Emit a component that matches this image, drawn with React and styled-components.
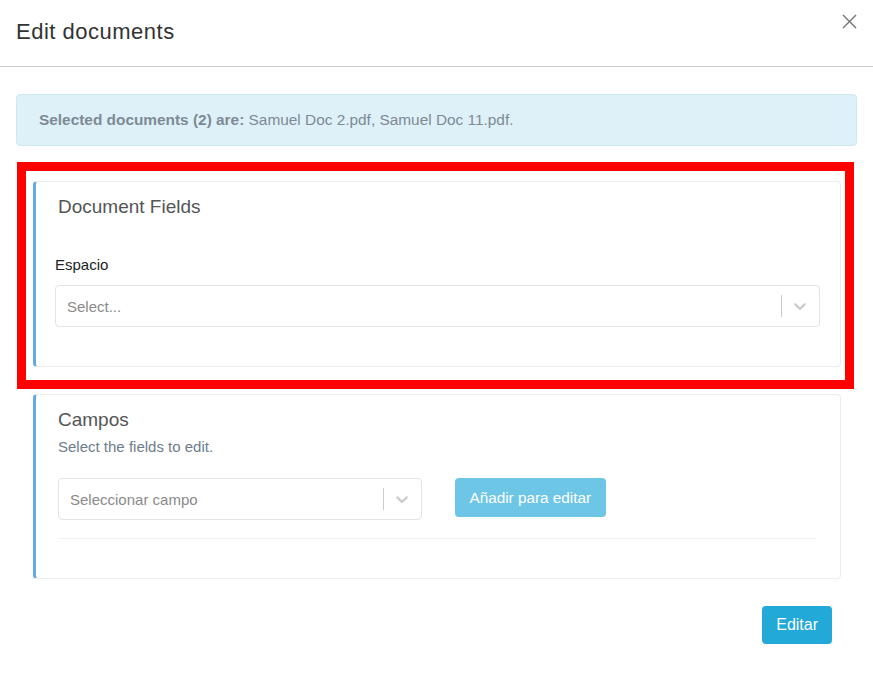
import styled, { createGlobalStyle } from 'styled-components';

const Global = createGlobalStyle`
  body {
    margin: 0;
    background: #fff;
    font-family: "Liberation Sans", Arial, sans-serif;
  }
`;

function Chevron() {
  return (
    <svg width="20" height="20" viewBox="0 0 20 20" fill="#cccccc">
      <path d="M4.516 7.548c0.436-0.446 1.043-0.481 1.576 0l3.908 3.747 3.908-3.747c0.533-0.481 1.141-0.446 1.574 0 0.436 0.445 0.408 1.197 0 1.615-0.406 0.418-4.695 4.502-4.695 4.502-0.217 0.223-0.502 0.335-0.787 0.335s-0.57-0.112-0.789-0.335c0 0-4.287-4.084-4.695-4.502s-0.436-1.17 0-1.615z" />
    </svg>
  );
}

function Select({ placeholder, width }) {
  return (
    <SelectBox $width={width}>
      <Placeholder>{placeholder}</Placeholder>
      <Indicators>
        <Separator />
        <Chevron />
      </Indicators>
    </SelectBox>
  );
}

export default function App() {
  return (
    <Modal>
      <Global />
      <Header>
        <Title>Edit documents</Title>
        <Close aria-label="Close">
          <svg width="15" height="15" viewBox="0 0 15 15" stroke="#777" strokeWidth="1.4">
            <line x1="1" y1="1" x2="14" y2="14" />
            <line x1="14" y1="1" x2="1" y2="14" />
          </svg>
        </Close>
      </Header>
      <Body>
        <Alert>
          <b>Selected documents (2) are:</b> Samuel Doc 2.pdf, Samuel Doc 11.pdf.
        </Alert>
        <Highlight>
          <Card>
            <CardTitle>Document Fields</CardTitle>
            <Field>
              <Label>Espacio</Label>
              <Select placeholder="Select..." />
            </Field>
          </Card>
        </Highlight>
        <Card $outer>
          <CardTitle>Campos</CardTitle>
          <Hint>Select the fields to edit.</Hint>
          <AddRow>
            <Select placeholder="Seleccionar campo" width="364px" />
            <Button $light>Añadir para editar</Button>
          </AddRow>
          <Divider />
        </Card>
      </Body>
      <Footer>
        <Button>Editar</Button>
      </Footer>
    </Modal>
  );
}

const Modal = styled.div`
  width: 873px;
  min-height: 676px;
  background: #fff;
  color: #333;
`;

const Header = styled.div`
  height: 66px;
  border-bottom: 1px solid #cfcfcf;
  display: flex;
  align-items: flex-start;
  justify-content: space-between;
  padding: 0 16px;
`;

const Title = styled.h4`
  margin: 19px 0 0;
  font-size: 22px;
  letter-spacing: 0.5px;
  font-weight: 400;
  color: #333;
`;

const Close = styled.button`
  border: 0;
  background: none;
  padding: 0;
  margin: 14px 0 0 0;
  width: 15px;
  height: 15px;
  cursor: pointer;
`;

const Body = styled.div`
  padding: 27px 16px 0;
`;

const Alert = styled.div`
  background: #dff1f8;
  border: 1px solid #cde8f1;
  border-radius: 4px;
  padding: 16px 22px;
  font-size: 15.4px;
  line-height: 18px;
  color: #7d8a96;
`;

const Highlight = styled.div`
  margin: 16px 3px 0 1px;
  border: 9px solid #ff0000;
  padding: 10px 4px 13px 7px;
`;

const Card = styled.div`
  border: 1px solid #ececec;
  border-left: 3px solid #65a9e4;
  border-radius: 4px;
  background: #fff;
  padding: 14px 20px 39px 22px;
  margin: ${p => (p.$outer ? '5px 16px 0 17px' : '0')};
`;

const CardTitle = styled.div`
  font-size: 19px;
  line-height: 22px;
  color: #555;
`;

const Field = styled.div`
  margin: 38px 0 0 -3px;
`;

const Label = styled.div`
  font-size: 15px;
  line-height: 18px;
  color: #222;
  margin-bottom: 11px;
`;

const Hint = styled.div`
  font-size: 15px;
  color: #6e7d8c;
  margin-top: 7px;
`;

const AddRow = styled.div`
  display: flex;
  align-items: flex-start;
  gap: 33px;
  margin-top: 23px;
  padding-bottom: 18px;
`;

const SelectBox = styled.div`
  box-sizing: border-box;
  width: ${p => p.$width || '100%'};
  height: 42px;
  border: 1px solid #e3e3e3;
  border-radius: 4px;
  display: flex;
  align-items: center;
  padding-left: 11px;
  background: #fff;
`;

const Placeholder = styled.div`
  flex: 1;
  font-size: 15px;
  color: #8a8a8a;
`;

const Indicators = styled.div`
  display: flex;
  align-items: center;
  gap: 8px;
  padding-right: 9px;
`;

const Separator = styled.span`
  width: 1px;
  height: 22px;
  background: #cccccc;
`;

const Button = styled.button`
  border: 0;
  border-radius: 4px;
  background: ${p => (p.$light ? '#6ec6e6' : '#22a9d8')};
  color: #fff;
  font-family: inherit;
  font-size: ${p => (p.$light ? '15.3px' : '16px')};
  height: ${p => (p.$light ? '39px' : '38px')};
  padding: 0 ${p => (p.$light ? '14.5px' : '14px')};
  cursor: pointer;
`;

const Divider = styled.div`
  height: 1px;
  background: #f0f0f0;
  margin-right: 3px;
`;

const Footer = styled.div`
  display: flex;
  justify-content: flex-end;
  padding: 27px 41px 0 0;
`;
